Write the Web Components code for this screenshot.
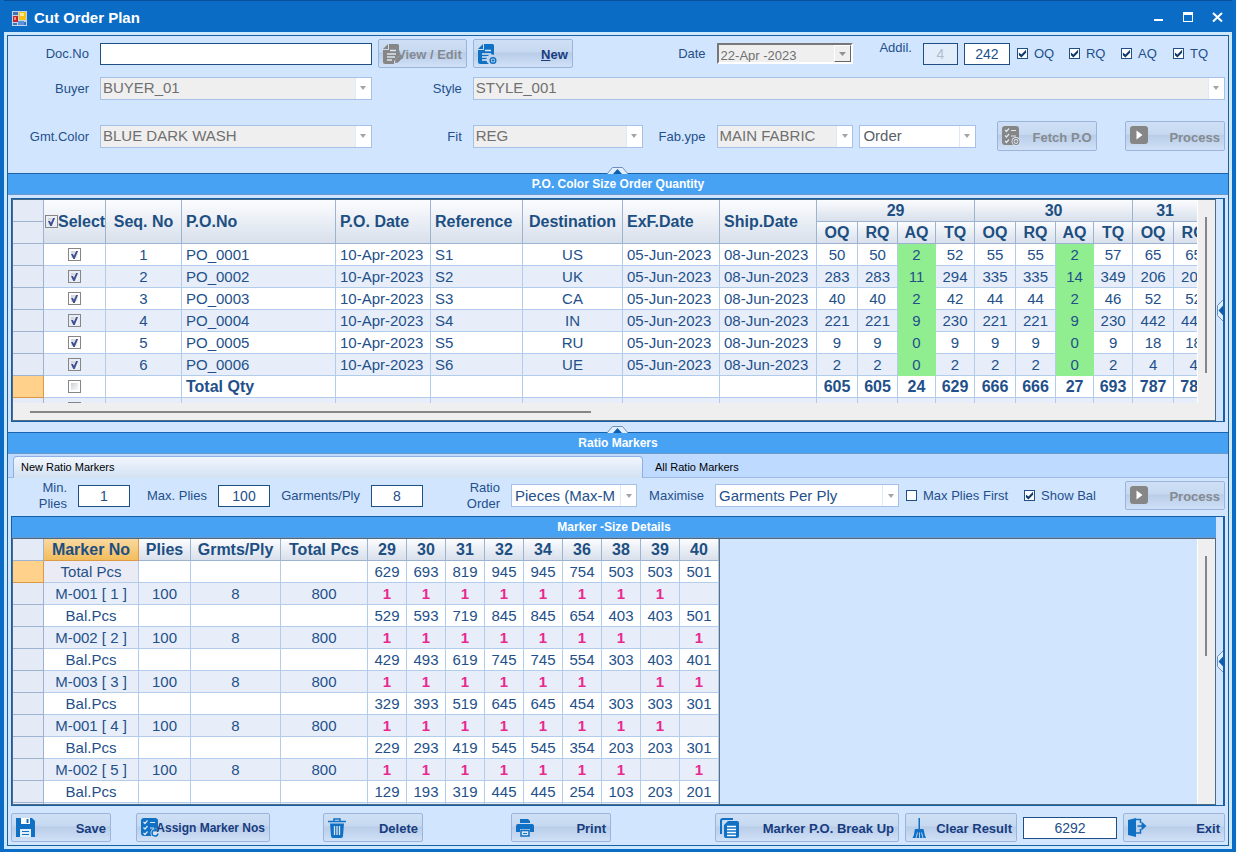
<!DOCTYPE html>
<html lang="en">
<head>
<meta charset="utf-8">
<title>Cut Order Plan</title>
<style>
  body {
    margin:0;
    background:#f4faff;
    color:#23508a;
    font:13px/15px "Liberation Sans", Arial, sans-serif;
  }
</style>
</head>
<body>
<cut-order-plan></cut-order-plan>

<script>
const makeTemplate = html => {
  const template = document.createElement('template')
  template.innerHTML = html
  return template
}

const icons = {
  edit: `<path fill="currentColor" d="M6 0H14.500Q16 0 16 1.500V12L11 17V20H2Q0 20 0 18V6H6Z"/>
    <path fill="currentColor" d="M0 5L5 0V5Z"/>
    <path stroke="#dbe6f4" stroke-width="1.300" fill="none" d="M7 6.500H13M4 10H13M4 13H12M4 16H9"/>
    <path fill="currentColor" d="M12 19L12.500 15.500L18 10.500L20.500 13L15 18.500Z"/>`,
  new: `<path fill="currentColor" d="M6 0H14.500Q16 0 16 1.500V11A5 5 0 0 0 11 20H2Q0 20 0 18V6H6Z"/>
    <path fill="currentColor" d="M0 5L5 0V5Z"/>
    <path stroke="#dbe6f4" stroke-width="1.300" fill="none" d="M7 6.500H13M4 10H13M4 13H10M4 16H9"/>
    <circle cx="15" cy="16.500" r="2.800" fill="#dbe6f4" stroke="currentColor" stroke-width="1.400"/>
    <path stroke="currentColor" d="M15 15V18M13.500 16.500H16.500"/>`,
  fetch: `<rect width="17" height="19" rx="3" fill="currentColor"/>
    <path stroke="#dbe6f4" stroke-width="1.200" fill="none" d="M3 4L4.500 5.500L7 2.500M3 9.500L4.500 11L7 8M3 15L4.500 16.500L7 13.500M9 4.500H14M9 10H14"/>
    <circle cx="14" cy="15.500" r="4.500" fill="#dbe6f4"/>
    <circle cx="14" cy="15.500" r="3" fill="none" stroke="currentColor" stroke-width="1.200"/>
    <path stroke="currentColor" stroke-width="1.400" d="M14 14V17M12.500 15.500H15.500"/>`,
  process: `<rect width="18" height="18" rx="3" fill="currentColor"/>
    <path fill="#fff" d="M6.500 4.500L12.500 9L6.500 13.500Z"/>`,
  save: `<path fill="currentColor" d="M0 0H16L19 3V19H0Z"/>
    <path fill="#fff" d="M5 0H14V6H5Z"/><path fill="currentColor" d="M10.500 1H12.500V5H10.500Z"/>
    <path fill="#e4eefa" d="M4 11H15V19H4Z"/>
    <path stroke="currentColor" d="M6 13.500H13M6 16.500H13"/>`,
  assign: `<rect width="17" height="18" rx="3" fill="currentColor"/>
    <path stroke="#dbe6f4" stroke-width="1.200" fill="none" d="M2.500 4L4 5.500L6.500 2.500M2.500 9.500L4 11L6.500 8M2.500 15L4 16.500L6.500 13.500M9 4.500H14M9 10H13"/>
    <circle cx="14" cy="15" r="4.500" fill="#dbe6f4"/>
    <path fill="none" stroke="currentColor" stroke-width="1.500" d="M14 12A3 3 0 1 0 17 15.500"/>
    <path fill="currentColor" d="M13.500 10L17 12L13.500 14Z"/>`,
  delete: `<path fill="none" stroke="currentColor" stroke-width="1.500" d="M0 3.500H18M6 3V1H12V3"/>
    <path fill="currentColor" d="M2 5.500H16L15 18Q15 20 13 20H5Q3 20 3 18Z"/>
    <path stroke="#dbe6f4" stroke-width="1.300" d="M6.500 8V17M9 8V17M11.500 8V17"/>`,
  print: `<path fill="currentColor" d="M4 1H12L14 3V5H4ZM2 6H16Q18 6 18 8V14H14V11H4V14H0V8Q0 6 2 6Z"/>
    <path fill="#dbe6f4" stroke="currentColor" stroke-width="1.500" d="M5 12.500H13V18H5Z"/>
    <path stroke="currentColor" d="M7 15.500H11"/>`,
  copy: `<path fill="none" stroke="currentColor" stroke-width="2" d="M1 16V3Q1 1 3 1H13"/>
    <path fill="currentColor" d="M8 3H17Q19 3 19 5V18Q19 20 17 20H6Q4 20 4 18V7Z"/>
    <path stroke="#fff" stroke-width="1.300" d="M7 8.500H16M7 11.500H16M7 14.500H16M7 17.500H16"/>`,
  broom: `<path fill="currentColor" d="M8.500 0H10V11H8.500ZM5 11H13.500L14 13H4.500Z"/>
    <path fill="currentColor" d="M4.500 13H14Q14.500 17 16 20H2.500Q4.500 17 4.500 13Z"/>
    <path stroke="#dbe6f4" stroke-width=".8" d="M7.500 14.500L6 20M9.500 14.500V20M11.500 14.500L13 20"/>`,
  exit: `<path fill="currentColor" d="M0 2L8 0V19L0 17Z"/>
    <path fill="none" stroke="currentColor" stroke-width="1.500" d="M8 1.500H12.500V5M12.500 11V15H8M9.500 8H17"/>
    <path fill="currentColor" d="M13.500 3.500L18.500 8L13.500 12.500Z"/>`
}

customElements.define('tool-button',
class ToolButton extends HTMLElement {
  static template = makeTemplate(`
<style>
  :host {
    display:block;
    flex:none;
    width:100px;
    height:29px;
  }
  button {
    display:grid;
    grid-template-columns:minmax(0, 1fr);
    align-items:center;
    box-sizing:border-box;
    width:100%;
    height:100%;
    padding:0 4px;
    border:1px solid #9ab4dc;
    border-radius:2px;
    background:linear-gradient(#cfe0f6, #c6d9f0 44%, #b9cde8 48%, #d0e1f7);
    color:#173c80;
    font:bold 13px/15px "Liberation Sans", Arial, sans-serif;
    white-space:nowrap;
  }
  :host([compact]) button { font-size:12px; }
  button:disabled { color:#858a91; }
  svg, span { grid-area:1 / 1; }
  svg {
    width:20px;
    height:20px;
    overflow:visible;
    color:#1070c4;
  }
  button:disabled svg { color:#868686; }
  span {
    justify-self:end;
    padding-top:2px;
  }
</style>
<button type="button"><svg viewBox="0 0 20 20" aria-hidden="true"></svg><span><slot></slot></span></button>
`)

  constructor() {
    super()
    this.attachShadow({mode: 'open'})
    .appendChild(ToolButton.template.content.cloneNode(true))
  }

  connectedCallback() {
    this.shadowRoot.querySelector('svg').innerHTML = icons[this.getAttribute('icon')]
    this.shadowRoot.querySelector('button').disabled = this.hasAttribute('disabled')
  }
})

// label and box are separate items of the grid or row round the field
const fieldStyle = `
  :host { display:contents; }
  label {
    align-self:center;
    padding-right:11px;
    text-align:right;
  }
  :host([top]) label {
    align-self:start;
    padding-top:1px;
  }
  :host([stacked]) label {
    justify-self:end;
    width:min-content;
    line-height:16px;
  }
`

customElements.define('text-field',
class TextField extends HTMLElement {
  static template = makeTemplate(`
<style>
  ${fieldStyle}
  input {
    align-self:center;
    box-sizing:border-box;
    width:var(--box, 100%);
    height:22px;
    padding:0 2px;
    border:1px solid #1f4f87;
    border-radius:0;
    background:#fff;
    color:#23508a;
    font:inherit;
    font-size:14px;
    text-align:center;
  }
  input:disabled {
    background:#e2edfb;
    color:#b4bcc8;
  }
</style>
<label for="box"></label><input id="box" type="text">
`)

  constructor() {
    super()
    this.attachShadow({mode: 'open'})
    .appendChild(TextField.template.content.cloneNode(true))
  }

  connectedCallback() {
    const label = this.shadowRoot.querySelector('label')
    const input = this.shadowRoot.querySelector('input')
    if (this.hasAttribute('label')) {
      label.textContent = this.getAttribute('label')
    } else {
      label.remove()
      input.setAttribute('aria-label', this.getAttribute('name'))
    }
    input.value = this.getAttribute('value') || ''
    input.disabled = this.hasAttribute('disabled')
  }
})

customElements.define('combo-field',
class ComboField extends HTMLElement {
  static template = makeTemplate(`
<style>
  ${fieldStyle}
  .combo {
    display:grid;
    grid-template-columns:minmax(0, 1fr) 15px;
    grid-column:span var(--span, 1);
    align-self:center;
    box-sizing:border-box;
    min-width:0;
    height:23px;
    border:1px solid #a6c0e6;
    background:#fff;
  }
  select {
    grid-area:1 / 1;
    appearance:none;
    box-sizing:border-box;
    min-width:0;
    padding:0 2px;
    border:0;
    border-right:1px solid #e0eaf6;
    border-radius:0;
    background:#fff;
    color:#23508a;
    font:inherit;
    font-size:15px;
    line-height:20px;
    text-overflow:clip;
  }
  select:disabled {
    background:#efefef;
    color:#707070;
    opacity:1;
  }
  :host([muted]) select { color:#5a6068; }
  :host(:not([disabled])) select { padding-left:3px; }
  svg {
    align-self:center;
    justify-self:center;
    width:6px;
    height:4px;
  }
</style>
<label for="list"></label>
<div class="combo">
  <select id="list"><option></option></select>
  <svg viewBox="0 0 6 4" aria-hidden="true"><path fill="#a4a4a4" d="M0 0H6L3 4Z"/></svg>
</div>
`)

  constructor() {
    super()
    this.attachShadow({mode: 'open'})
    .appendChild(ComboField.template.content.cloneNode(true))
  }

  connectedCallback() {
    const label = this.shadowRoot.querySelector('label')
    const select = this.shadowRoot.querySelector('select')
    if (this.hasAttribute('label')) {
      label.textContent = this.getAttribute('label')
    } else {
      label.remove()
      select.setAttribute('aria-label', this.getAttribute('name'))
    }
    select.options[0].textContent = this.getAttribute('value')
    select.disabled = this.hasAttribute('disabled')
  }
})

customElements.define('date-field',
class DateField extends HTMLElement {
  static template = makeTemplate(`
<style>
  ${fieldStyle}
  .date {
    display:flex;
    align-self:center;
    box-sizing:border-box;
    min-width:0;
    height:21px;
    border:2px solid #777;
    border-right-color:#fff;
    border-bottom-color:#fff;
    background:#efefef;
  }
  input {
    flex:1;
    min-width:0;
    padding:3px 2px 0;
    border:0;
    background:none;
    color:#707070;
    font:inherit;
  }
  button {
    display:grid;
    place-items:center;
    width:17px;
    padding:0;
    border:1px solid;
    border-color:#fff #666 #666 #fff;
    background:#efefef;
  }
</style>
<label for="day"></label>
<div class="date">
  <input id="day" type="text" disabled>
  <button type="button" disabled aria-label="Open calendar"><svg width="7" height="4" aria-hidden="true"><path fill="#929292" d="M0 0H7L3.500 4Z"/></svg></button>
</div>
`)

  constructor() {
    super()
    this.attachShadow({mode: 'open'})
    .appendChild(DateField.template.content.cloneNode(true))
  }

  connectedCallback() {
    this.shadowRoot.querySelector('label').textContent = this.getAttribute('label')
    this.shadowRoot.querySelector('input').value = this.getAttribute('value')
  }
})

customElements.define('check-field',
class CheckField extends HTMLElement {
  static template = makeTemplate(`
<style>
  :host {
    display:block;
    width:52px;
  }
  label {
    display:flex;
    align-items:center;
    gap:6px;
    white-space:nowrap;
  }
  input {
    appearance:none;
    flex:none;
    box-sizing:border-box;
    width:11px;
    height:11px;
    margin:0;
    border:1px solid #1f4f87;
    background:#fff;
  }
  input:checked::before {
    content:"";
    display:block;
    height:9px;
    background:#123a6c;
    clip-path:polygon(10% 38%, 38% 62%, 90% 8%, 90% 42%, 38% 94%, 10% 70%);
  }
</style>
<label><input type="checkbox"><slot></slot></label>
`)

  constructor() {
    super()
    this.attachShadow({mode: 'open'})
    .appendChild(CheckField.template.content.cloneNode(true))
  }

  connectedCallback() {
    this.shadowRoot.querySelector('input').checked = this.hasAttribute('checked')
  }
})

customElements.define('section-bar',
class SectionBar extends HTMLElement {
  static template = makeTemplate(`
<style>
  :host {
    display:block;
    position:relative;
    flex:none;
    box-sizing:border-box;
    height:22px;
    border-top:1px solid #1a62ab;
    border-bottom:1px solid #6a9aca;
    background:#48a2f3;
  }
  h2 {
    margin:0;
    color:#fff;
    font-size:12px;
    line-height:20px;
    text-align:center;
  }
  svg {
    display:none;
    position:absolute;
    bottom:100%;
    left:50%;
    margin-left:-11px;
  }
  :host([handle]) svg { display:block; }
</style>
<h2><slot></slot></h2>
<svg width="21" height="7" aria-hidden="true">
  <path fill="#e2efff" stroke="#6d8fbb" d="M0 7L5.500 .5H15.500L21 7"/>
  <path fill="#0a5fb5" d="M6 7L10.500 2L15 7Z"/>
</svg>
`)

  constructor() {
    super()
    this.attachShadow({mode: 'open'})
    .appendChild(SectionBar.template.content.cloneNode(true))
  }
})

customElements.define('grid-panel',
class GridPanel extends HTMLElement {
  static template = makeTemplate(`
<style>
  :host {
    display:flex;
    box-sizing:border-box;
    min-height:0;
    border:1px solid #175fa4;
    border-right-width:2px;
  }
  .main {
    display:flex;
    flex:1;
    flex-direction:column;
    min-width:0;
  }
  .frame {
    display:grid;
    flex:1;
    grid-template:minmax(0, 1fr) auto / minmax(0, 1fr) 17px;
    min-height:0;
    border:1px solid #4d6b85;
    background:#efefef;
  }
  .view {
    overflow:hidden;
    height:var(--view, auto);
    border-right:1px solid #fff;
    background:#d2e5ff;
  }
  .track { padding:17px 7px 0; }
  .thumb {
    width:2px;
    height:var(--thumb, 100px);
    background:#868686;
  }
  .bottom {
    display:none;
    padding:8px 0 0 17px;
    height:9px;
  }
  :host([wide]) .bottom { display:block; }
  .bottom .thumb {
    width:48%;
    height:2px;
  }
  .rail {
    display:flex;
    align-items:center;
    justify-content:flex-end;
    width:7px;
  }
</style>
<div class="main">
  <slot name="bar"></slot>
  <div class="frame">
    <div class="view"><slot></slot></div>
    <div class="track"><div class="thumb"></div></div>
    <div class="bottom"><div class="thumb"></div></div>
  </div>
</div>
<div class="rail">
  <svg width="6" height="21" aria-hidden="true">
    <path fill="#e2efff" stroke="#6d8fbb" d="M6 0L.5 5.500V15.500L6 21"/>
    <path fill="#0a5fb5" d="M6 5.500L1.500 10.500L6 15.500Z"/>
  </svg>
</div>
`)

  constructor() {
    super()
    this.attachShadow({mode: 'open'})
    .appendChild(GridPanel.template.content.cloneNode(true))
  }
})

const tableStyle = `
  :host { display:block; }
  table {
    table-layout:fixed;
    width:0;
    border-collapse:separate;
    border-spacing:0;
  }
  th, td {
    overflow:hidden;
    box-sizing:border-box;
    height:22px;
    padding:0;
    border-right:1px solid #b2cceb;
    border-bottom:1px solid #b2cceb;
    color:#23508a;
    font-size:15px;
    line-height:21px;
    text-align:center;
    white-space:nowrap;
  }
  td { background:#fff; }
  tr.alt td { background:#e7eef9; }
  thead th {
    border-color:#9db3cf;
    background:linear-gradient(#fbfcfe, #d8e0ec);
    color:#1d4f82;
    font-size:16px;
  }
  tr .row, tr.alt .row {
    border-color:#9db3cf;
    background:#e4ebf7;
  }
  tr.current .row {
    border-color:#dc9a48;
    background:#ffd18a;
  }
`

customElements.define('order-table',
class OrderTable extends HTMLElement {
  static template = makeTemplate(`
<style>
  ${tableStyle}
  .text {
    padding-left:4px;
    text-align:left;
  }
  td.aq {
    border-color:#90ee90;
    background:#90ee90 !important;
  }
  tr.total td { font-weight:bold; }
  tr.total td:not(.row) { font-size:16px; }
  .cut { padding-right:16px; }
  input {
    appearance:none;
    display:block;
    box-sizing:border-box;
    width:13px;
    height:13px;
    margin:0 auto;
    padding:2px;
    border:1px solid #868686;
    background:linear-gradient(135deg, #ccd0d6, #fbfbfb) content-box #fafafa;
  }
  input:checked::before {
    content:"";
    display:block;
    height:8px;
    background:#3f4f92;
    clip-path:polygon(0 36%, 26% 36%, 42% 60%, 74% 0, 100% 0, 54% 100%, 32% 100%);
  }
  label {
    display:flex;
    align-items:center;
    padding-left:1px;
  }
  label input { margin:0; flex:none; }
</style>
<table>
  <colgroup></colgroup>
  <thead>
    <tr>
      <td class="row"></td>
      <th rowspan="2"><label><input type="checkbox" checked>Select</label></th>
      <th rowspan="2">Seq. No</th>
      <th rowspan="2" class="text">P.O.No</th>
      <th rowspan="2" class="text">P.O. Date</th>
      <th rowspan="2" class="text">Reference</th>
      <th rowspan="2">Destination</th>
      <th rowspan="2" class="text">ExF.Date</th>
      <th rowspan="2" class="text">Ship.Date</th>
      <th colspan="4">29</th>
      <th colspan="4">30</th>
      <th colspan="2" class="cut">31</th>
    </tr>
    <tr>
      <td class="row"></td>
      <th>OQ</th><th>RQ</th><th>AQ</th><th>TQ</th>
      <th>OQ</th><th>RQ</th><th>AQ</th><th>TQ</th>
      <th>OQ</th><th>RQ</th>
    </tr>
  </thead>
  <tbody></tbody>
</table>
`)

  constructor() {
    super()
    this.attachShadow({mode: 'open'})
    .appendChild(OrderTable.template.content.cloneNode(true))
    this._widths = [31, 62, 76, 154, 95, 92, 100, 97, 97, 41, 40, 38, 39, 41, 40, 38, 39, 41, 40]
    this._orders = [
      ['US', [50, 50, 2, 52, 55, 55, 2, 57, 65, 65]],
      ['UK', [283, 283, 11, 294, 335, 335, 14, 349, 206, 206]],
      ['CA', [40, 40, 2, 42, 44, 44, 2, 46, 52, 52]],
      ['IN', [221, 221, 9, 230, 221, 221, 9, 230, 442, 442]],
      ['RU', [9, 9, 0, 9, 9, 9, 0, 9, 18, 18]],
      ['UE', [2, 2, 0, 2, 2, 2, 0, 2, 4, 4]]
    ]
    this._totals = [605, 605, 24, 629, 666, 666, 27, 693, 787, 787]
  }

  connectedCallback() {
    const box = (name, state) => `<td><input type="checkbox" aria-label="${name}" ${state}></td>`
    const table = this.shadowRoot.querySelector('table')
    table.style.width = this._widths.reduce((a, b) => a + b) + 'px'
    this.shadowRoot.querySelector('colgroup').innerHTML = this._widths.map(w => `<col style="width:${w}px">`).join('')
    const rows = this._orders.map(([country, sizes], i) => {
      const n = i + 1
      return `<tr class="${i % 2 ? 'alt' : ''}"><td class="row"></td>${box('PO_000' + n, 'checked')}
        <td>${n}</td><td class="text">PO_000${n}</td><td class="text">10-Apr-2023</td><td class="text">S${n}</td>
        <td>${country}</td><td class="text">05-Jun-2023</td><td class="text">08-Jun-2023</td>
        ${sizes.map((q, c) => `<td class="${c % 4 === 2 ? 'aq' : ''}">${q}</td>`).join('')}</tr>`
    })
    rows.push(`<tr class="total current"><td class="row"></td>${box('Total', '')}<td></td><td class="text">Total Qty</td>
      ${'<td></td>'.repeat(5)}${this._totals.map(q => `<td>${q}</td>`).join('')}</tr>`)
    rows.push(`<tr class="alt"><td class="row"></td>${box('Next order', '')}${'<td></td>'.repeat(17)}</tr>`)
    this.shadowRoot.querySelector('tbody').innerHTML = rows.join('')
  }
})

customElements.define('marker-table',
class MarkerTable extends HTMLElement {
  static template = makeTemplate(`
<style>
  ${tableStyle}
  :host {
    width:max-content;
    border-right:1px solid #5d6f82;
  }
  thead th.picked {
    border-color:#dc9a48;
    background:linear-gradient(#f9d9a0, #f3bd5c);
  }
  tr.current td:nth-child(2) { background:#eaebf4; }
  td.one {
    color:#ea2790;
    font-weight:bold;
  }
</style>
<table>
  <colgroup></colgroup>
  <thead>
    <tr>
      <td class="row"></td>
      <th class="picked">Marker No</th><th>Plies</th><th>Grmts/Ply</th><th>Total Pcs</th>
      <th>29</th><th>30</th><th>31</th><th>32</th><th>34</th><th>36</th><th>38</th><th>39</th><th>40</th>
    </tr>
  </thead>
  <tbody></tbody>
</table>
`)

  constructor() {
    super()
    this.attachShadow({mode: 'open'})
    .appendChild(MarkerTable.template.content.cloneNode(true))
    this._widths = [31, 95, 52, 90, 87, 39, 39, 39, 39, 39, 39, 39, 39, 39]
    this._rows = [
      ['Total Pcs', 629, 693, 819, 945, 945, 754, 503, 503, 501],
      ['M-001 [ 1 ]', 1, 1, 1, 1, 1, 1, 1, 1, ''],
      ['Bal.Pcs', 529, 593, 719, 845, 845, 654, 403, 403, 501],
      ['M-002 [ 2 ]', 1, 1, 1, 1, 1, 1, 1, '', 1],
      ['Bal.Pcs', 429, 493, 619, 745, 745, 554, 303, 403, 401],
      ['M-003 [ 3 ]', 1, 1, 1, 1, 1, 1, '', 1, 1],
      ['Bal.Pcs', 329, 393, 519, 645, 645, 454, 303, 303, 301],
      ['M-001 [ 4 ]', 1, 1, 1, 1, 1, 1, 1, 1, ''],
      ['Bal.Pcs', 229, 293, 419, 545, 545, 354, 203, 203, 301],
      ['M-002 [ 5 ]', 1, 1, 1, 1, 1, 1, 1, '', 1],
      ['Bal.Pcs', 129, 193, 319, 445, 445, 254, 103, 203, 201],
      ['', '', '', '', '', '', '', '', '', '']
    ]
  }

  connectedCallback() {
    const table = this.shadowRoot.querySelector('table')
    table.style.width = this._widths.reduce((a, b) => a + b) + 'px'
    this.shadowRoot.querySelector('colgroup').innerHTML = this._widths.map(w => `<col style="width:${w}px">`).join('')
    this.shadowRoot.querySelector('tbody').innerHTML = this._rows.map(([name, ...sizes], i) => {
      const marker = name.startsWith('M-')
      const counts = marker ? [100, 8, 800] : ['', '', '']
      return `<tr class="${i % 2 ? 'alt' : ''} ${i ? '' : 'current'}"><td class="row"></td><td>${name}</td>
        ${counts.map(n => `<td>${n}</td>`).join('')}
        ${sizes.map(n => `<td class="${marker ? 'one' : ''}">${n}</td>`).join('')}</tr>`
    }).join('')
  }
})

customElements.define('tab-strip',
class TabStrip extends HTMLElement {
  static template = makeTemplate(`
<style>
  :host {
    display:flex;
    flex:none;
    height:24px;
    background:#bfdaff;
  }
  :host::before {
    content:"";
    width:5px;
    border-bottom:1px solid #9dbce6;
    box-sizing:border-box;
  }
  button {
    flex:585 585 585px;
    box-sizing:border-box;
    padding:3px 12px 0;
    border:0;
    border-bottom:1px solid #9dbce6;
    background:none;
    color:#000;
    font:inherit;
    font-size:11px;
    text-align:left;
  }
  button.active {
    flex:630 630 630px;
    margin-top:2px;
    padding:0 7px;
    border:1px solid #8fb0e0;
    border-bottom:0;
    border-radius:4px 4px 0 0;
    background:linear-gradient(#f0f6fe, #d3e1f2);
  }
</style>
<button type="button" class="active">New Ratio Markers</button>
<button type="button">All Ratio Markers</button>
`)

  constructor() {
    super()
    this.attachShadow({mode: 'open'})
    .appendChild(TabStrip.template.content.cloneNode(true))
  }
})

customElements.define('title-bar',
class TitleBar extends HTMLElement {
  static template = makeTemplate(`
<style>
  :host {
    display:flex;
    align-items:center;
    flex:none;
    box-sizing:border-box;
    height:32px;
    padding:3px 9px 0 8px;
    border-top:1px solid #0a4f9c;
    background:#0b6cc6;
    color:#fff;
  }
  h1 {
    flex:1;
    margin:0 0 0 7px;
    font-size:15px;
    line-height:18px;
  }
  .controls {
    display:flex;
    gap:16px;
  }
  button {
    padding:0;
    border:0;
    background:none;
    color:#fff;
  }
  svg { display:block; }
</style>
<svg width="15" height="15" aria-hidden="true">
  <rect width="15" height="15" fill="#c3d3ea"/>
  <rect x="1" y="1" width="5" height="3" fill="#3e72b4"/>
  <rect x="1" y="5" width="5" height="6" fill="#c1272d"/><rect x="2" y="6" width="2" height="3" fill="#f08a80"/>
  <rect x="7" y="1" width="7" height="8" fill="#f6c416"/><rect x="8" y="2" width="4" height="3" fill="#fdeb96"/>
  <rect x="1" y="12" width="4" height="2" fill="#3e72b4"/>
  <rect x="6" y="10" width="6" height="4" fill="#5b92de"/><rect x="12" y="11" width="2" height="3" fill="#3e72b4"/>
</svg>
<h1><slot></slot></h1>
<div class="controls">
  <button type="button" aria-label="Minimise"><svg width="13" height="12"><path fill="currentColor" d="M0 7H9V9H0Z"/></svg></button>
  <button type="button" aria-label="Maximise"><svg width="13" height="12"><path fill="currentColor" fill-rule="evenodd" d="M0 0H10V10H0ZM1 3V9H9V3Z"/></svg></button>
  <button type="button" aria-label="Close"><svg width="11" height="12"><path stroke="currentColor" stroke-width="2" d="M1 1L10 9.500M10 1L1 9.500"/></svg></button>
</div>
`)

  constructor() {
    super()
    this.attachShadow({mode: 'open'})
    .appendChild(TitleBar.template.content.cloneNode(true))
  }
})

customElements.define('cut-order-plan',
class CutOrderPlan extends HTMLElement {
  static template = makeTemplate(`
<style>
  :host {
    display:flex;
    flex-direction:column;
    box-sizing:border-box;
    height:100vh;
    margin-right:1px;
    border:solid #0b6cc6;
    border-width:0 4px 3px;
    background:#0b6cc6;
  }
  .rim {
    display:flex;
    flex:1;
    flex-direction:column;
    min-height:0;
    padding:3px;
    background:#cbe8ff;
  }
  main {
    display:flex;
    flex:1;
    flex-direction:column;
    min-height:0;
    border:1px solid #1a5f9e;
    background:#d2e5ff;
  }
  .order {
    display:grid;
    grid-template-columns:92px 272fr 101px 170fr 74px 137fr 371fr;
    grid-template-rows:29px 40px 56px;
    align-items:center;
    padding:3px 3px 9px 0;
  }
  .order .view {
    width:89px;
    margin-left:6px;
  }
  .extras {
    display:flex;
    align-items:center;
    height:29px;
    padding-left:26px;
  }
  .extras check-field:first-of-type { margin-left:7px; }
  .addil { --box:35px; }
  .quantity { --box:46px; }
  .gap { width:6px; }
  .fetch {
    display:grid;
    grid-template-columns:116fr 21px 228fr;
    align-items:center;
    padding-left:6px;
  }
  .fetch div {
    display:flex;
    grid-column:3;
    justify-content:space-between;
  }
  .fetch tool-button { height:30px; }
  .orders {
    flex:none;
    margin:3px 3px 10px;
    --view:203px;
    --thumb:156px;
  }
  .ratio {
    display:grid;
    flex:none;
    grid-template-columns:70px 52px 88px 52px 101px 52px 88px 126fr 78px 184fr 326px;
    align-items:center;
    height:35px;
    padding:0 3px 3px 0;
  }
  .options {
    display:flex;
    align-items:center;
    padding-left:7px;
  }
  .options check-field { width:118px; }
  .options check-field + check-field {
    flex:1;
    width:auto;
  }
  .markers {
    flex:1;
    margin:0 3px;
  }
  .markers section-bar {
    height:21px;
    border-top:0;
  }
  footer {
    display:grid;
    flex:none;
    grid-template-columns:125fr 187fr 188fr 204fr auto;
    padding:7px 3px 3px;
  }
  .results {
    display:flex;
    align-items:center;
    gap:6px;
    --box:94px;
  }
  .assign { width:134px; }
  .breakup { width:184px; }
  .clear { width:112px; }
  .exit { width:102px; }
  u { text-decoration-thickness:1px; }
</style>
<title-bar>Cut Order Plan</title-bar>
<div class="rim">
  <main>
    <div class="order">
      <text-field label="Doc.No"></text-field>
      <tool-button class="view" icon="edit" disabled>View / Edit</tool-button>
      <tool-button icon="new"><u>N</u>ew</tool-button>
      <date-field label="Date" value="22-Apr -2023"></date-field>
      <div class="extras">
        <text-field class="addil" top label="Addil." value="4" disabled></text-field>
        <span class="gap"></span>
        <text-field class="quantity" name="Additional quantity" value="242"></text-field>
        <check-field checked>OQ</check-field>
        <check-field checked>RQ</check-field>
        <check-field checked>AQ</check-field>
        <check-field checked>TQ</check-field>
      </div>
      <combo-field label="Buyer" value="BUYER_01" disabled></combo-field>
      <combo-field style="--span:4" label="Style" value="STYLE_001" disabled></combo-field>
      <combo-field label="Gmt.Color" value="BLUE DARK WASH" disabled></combo-field>
      <combo-field label="Fit" value="REG" disabled></combo-field>
      <combo-field label="Fab.ype" value="MAIN FABRIC" disabled></combo-field>
      <div class="fetch">
        <combo-field name="Source" value="Order" muted></combo-field>
        <div>
          <tool-button icon="fetch" disabled>Fetch P.O</tool-button>
          <tool-button icon="process" disabled>Process</tool-button>
        </div>
      </div>
    </div>

    <section-bar handle>P.O. Color Size Order Quantity</section-bar>
    <grid-panel class="orders" wide>
      <order-table></order-table>
    </grid-panel>

    <section-bar handle>Ratio Markers</section-bar>
    <tab-strip></tab-strip>
    <div class="ratio">
      <text-field stacked label="Min. Plies" value="1"></text-field>
      <text-field label="Max. Plies" value="100"></text-field>
      <text-field label="Garments/Ply" value="8"></text-field>
      <combo-field stacked label="Ratio Order" value="Pieces (Max-M"></combo-field>
      <combo-field label="Maximise" value="Garments Per Ply"></combo-field>
      <div class="options">
        <check-field>Max Plies First</check-field>
        <check-field checked>Show Bal</check-field>
        <tool-button icon="process" disabled>Process</tool-button>
      </div>
    </div>

    <grid-panel class="markers">
      <section-bar slot="bar">Marker -Size Details</section-bar>
      <marker-table></marker-table>
    </grid-panel>

    <footer>
      <tool-button icon="save">Save</tool-button>
      <tool-button class="assign" icon="assign" compact>Assign Marker Nos</tool-button>
      <tool-button icon="delete">Delete</tool-button>
      <tool-button icon="print">Print</tool-button>
      <div class="results">
        <tool-button class="breakup" icon="copy">Marker P.O. Break Up</tool-button>
        <tool-button class="clear" icon="broom">Clear Result</tool-button>
        <text-field name="Result" value="6292"></text-field>
        <tool-button class="exit" icon="exit">Exit</tool-button>
      </div>
    </footer>
  </main>
</div>
`)

  constructor() {
    super()
    this.attachShadow({mode: 'open'})
    .appendChild(CutOrderPlan.template.content.cloneNode(true))
  }
})
</script>
</body>
</html>
